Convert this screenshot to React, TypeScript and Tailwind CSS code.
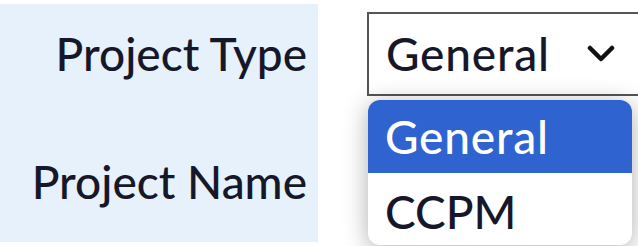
const font = { fontFamily: "Lato, 'Open Sans', sans-serif" };

function Chevron() {
  return (
    <svg viewBox="0 0 28 18" className="ml-auto mr-[30px] h-[18px] w-[28px]" fill="none" stroke="#111" strokeWidth={4.5} strokeLinecap="round" strokeLinejoin="round">
      <polyline points="3,3 14,14 25,3" />
    </svg>
  );
}

export default function App() {
  return (
    <div className="relative h-[246px] w-[638px] overflow-hidden bg-white" style={font}>
      <div className="flex h-full pt-[4px] pb-[4px]">
        <div className="flex w-[318px] shrink-0 flex-col items-end bg-[#e6f1fb] pr-[11px] font-medium text-[#17172a]">
          <div className="mt-[22px] text-[46px] leading-[56px]">Project Type</div>
          <div className="mt-[72px] text-[46px] leading-[56px]">Project Name</div>
        </div>
        <div className="relative flex-1">
          <div className="ml-[49px] mt-[8px] flex h-[84px] w-[280px] items-center border-2 border-[#555] bg-white pl-[17px] font-medium text-[#17172a]">
            <span className="text-[46px] leading-none tracking-[0.8px]">General</span>
            <Chevron />
          </div>
        </div>
      </div>
      <div className="absolute left-[368px] top-[100px] w-[264px] overflow-hidden rounded-[12px] bg-white shadow-[0_4px_24px_rgba(0,0,0,0.32)]">
        <div className="h-[73px] bg-[#2f63cf] pl-[17px] text-[46px] font-medium leading-[73px] tracking-[0.8px] text-white">General</div>
        <div className="h-[72px] pl-[17px] pt-[4px] text-[46px] font-medium leading-[70px] text-[#17172a]">CCPM</div>
      </div>
    </div>
  );
}
